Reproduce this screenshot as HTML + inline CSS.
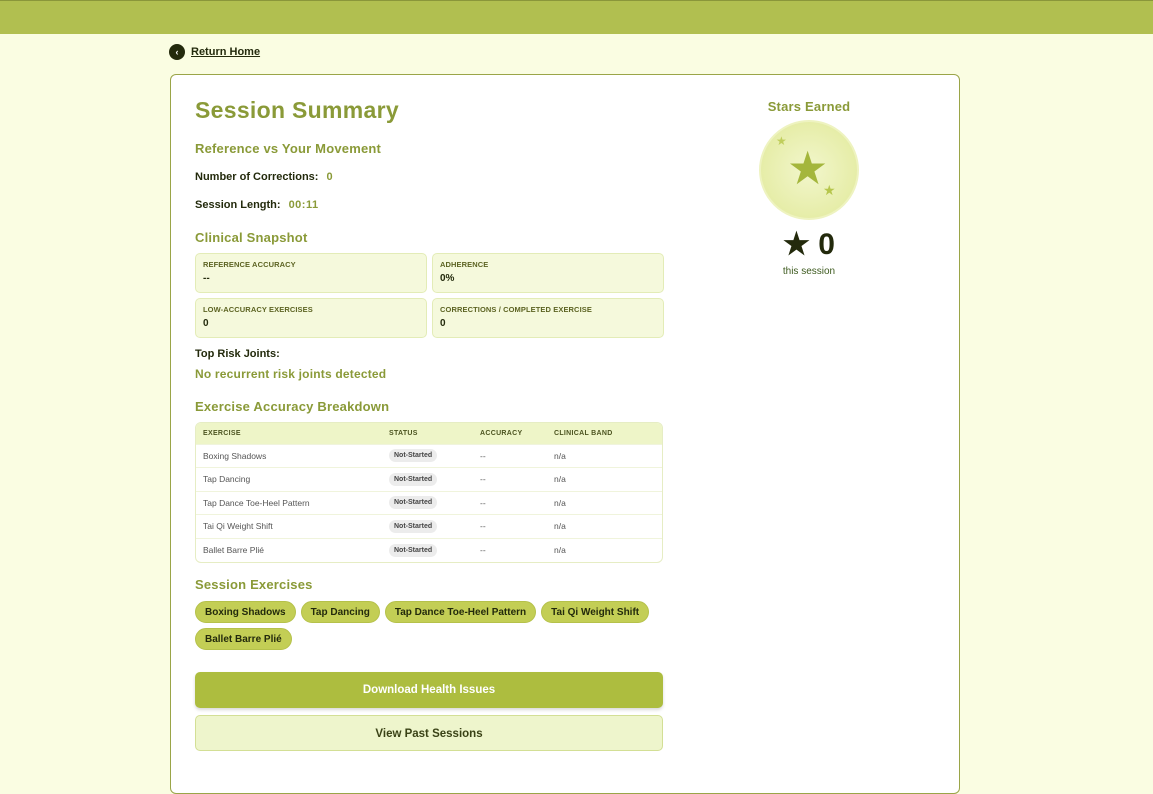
<!DOCTYPE html>
<html><head><meta charset="utf-8"><style>
*{box-sizing:border-box;margin:0;padding:0}
body{width:1153px;height:769px;overflow:hidden;background:#fafde2;font-family:"Liberation Sans",sans-serif;color:#232a0c;position:relative}
.top{position:absolute;left:0;top:0;width:1153px;height:34px;background:#b1bf50;border-top:1px solid #8a963a}
.back{position:absolute;left:169px;top:44px;display:flex;align-items:center;font-weight:bold;font-size:11px;text-decoration:underline;color:#232a0c}
.back i{width:16px;height:16px;border-radius:50%;background:#232a0c;color:#fff;font-style:normal;font-size:9px;display:flex;align-items:center;justify-content:center;margin-right:6px;text-decoration:none}
.card{position:absolute;left:170px;top:74px;width:790px;height:720px;background:#fff;border:1.5px solid #9aa548;border-radius:6px}
.a{position:absolute;left:24px}
h1{font-size:23px;color:#8a9a38;font-weight:900;letter-spacing:.3px}
.h2{font-size:13px;font-weight:bold;color:#8a9a38;letter-spacing:.2px}
.lbl{font-size:11px;font-weight:bold}
.lbl span{color:#8a9a38;margin-left:8px;letter-spacing:.5px}
.box{position:absolute;width:232px;height:40px;background:#f5f9dc;border:1px solid #e3ecb7;border-radius:5px;padding:6px 7px}
.box .t{font-size:7.5px;font-weight:bold;color:#5c6322;letter-spacing:.1px}
.box .v{font-size:10px;font-weight:bold;margin-top:4px}
table{border-collapse:collapse;width:468px;font-size:8.5px;color:#555}
.tbl{position:absolute;left:24px;top:348px;width:468px;border:1px solid #e6edc4;border-radius:6px;overflow:hidden}
th{background:#eef5c8;height:21px;text-align:left;font-size:7px;color:#4c5420;font-weight:bold;letter-spacing:.3px;padding-left:7px}
td{height:23.5px;border-top:1px solid #f0f4dc;padding-left:7px}
.pill{display:inline-block;background:#ececec;border-radius:8px;padding:3px 5px;font-weight:bold;font-size:7px;color:#444}
.chip{display:inline-block;background:#c3ce55;border:1px solid #b5c14a;border-radius:12px;height:22px;line-height:21px;padding:0 9px;font-size:10px;font-weight:bold;margin:0 5px 5px 0}
.btn{position:absolute;left:24px;width:468px;height:36px;border-radius:5px;font-size:11.5px;font-weight:bold;text-align:center;line-height:36px}
</style></head><body>
<div class="top"></div>
<div class="back"><i>‹</i>Return Home</div>
<div class="card">
<h1 class="a" style="top:22px">Session Summary</h1>
<div class="a h2" style="top:66px">Reference vs Your Movement</div>
<div class="a lbl" style="top:96px">Number of Corrections:<span>0</span></div>
<div class="a lbl" style="top:124px">Session Length:<span>00:11</span></div>
<div class="a h2" style="top:155px">Clinical Snapshot</div>
<div class="box" style="left:24px;top:178px"><div class="t">REFERENCE ACCURACY</div><div class="v">--</div></div>
<div class="box" style="left:261px;top:178px"><div class="t">ADHERENCE</div><div class="v">0%</div></div>
<div class="box" style="left:24px;top:223px"><div class="t">LOW-ACCURACY EXERCISES</div><div class="v">0</div></div>
<div class="box" style="left:261px;top:223px"><div class="t">CORRECTIONS / COMPLETED EXERCISE</div><div class="v">0</div></div>
<div class="a lbl" style="top:273px">Top Risk Joints:</div>
<div class="a h2" style="top:292px;font-size:12px">No recurrent risk joints detected</div>
<div class="a h2" style="top:324px">Exercise Accuracy Breakdown</div>
<div class="tbl" style="top:347px"><table>
<tr><th style="width:186px">EXERCISE</th><th style="width:91px">STATUS</th><th style="width:74px">ACCURACY</th><th>CLINICAL BAND</th></tr>
<tr><td>Boxing Shadows</td><td><span class="pill">Not-Started</span></td><td>--</td><td>n/a</td></tr>
<tr><td>Tap Dancing</td><td><span class="pill">Not-Started</span></td><td>--</td><td>n/a</td></tr>
<tr><td>Tap Dance Toe-Heel Pattern</td><td><span class="pill">Not-Started</span></td><td>--</td><td>n/a</td></tr>
<tr><td>Tai Qi Weight Shift</td><td><span class="pill">Not-Started</span></td><td>--</td><td>n/a</td></tr>
<tr><td>Ballet Barre Plié</td><td><span class="pill">Not-Started</span></td><td>--</td><td>n/a</td></tr>
</table></div>
<div class="a h2" style="top:502px">Session Exercises</div>
<div class="a" style="top:526px;width:470px"><span class="chip">Boxing Shadows</span><span class="chip">Tap Dancing</span><span class="chip">Tap Dance Toe-Heel Pattern</span><span class="chip">Tai Qi Weight Shift</span><span class="chip">Ballet Barre Plié</span></div>
<div class="btn" style="top:597px;background:#adbd3f;color:#fff;box-shadow:0 2px 3px rgba(0,0,0,.15)">Download Health Issues</div>
<div class="btn" style="top:640px;background:#eef5cc;border:1px solid #d3df95;color:#3a4216">View Past Sessions</div>
<div style="position:absolute;left:588px;top:24px;width:100px;text-align:center" class="h2">Stars Earned</div>
<div style="position:absolute;left:588px;top:45px;width:100px;height:100px;border-radius:50%;background:radial-gradient(circle,#f2f6cc 0%,#e6eda8 70%,#dfe79a 100%);border:2px solid #eef3c0"></div>
<div style="position:absolute;left:616px;top:70px;font-size:46px;color:#a4b63c;line-height:1">★</div>
<div style="position:absolute;left:605px;top:60px;font-size:12px;color:#c0ce5c;line-height:1">★</div>
<div style="position:absolute;left:652px;top:108px;font-size:14px;color:#b6c64c;line-height:1">★</div>
<div style="position:absolute;left:588px;top:152px;width:100px;text-align:center;font-size:30px;font-weight:900;color:#232a0c">★ 0</div>
<div style="position:absolute;left:588px;top:191px;width:100px;text-align:center;font-size:10px;color:#3d5a1e">this session</div>
</div>
</body></html>
